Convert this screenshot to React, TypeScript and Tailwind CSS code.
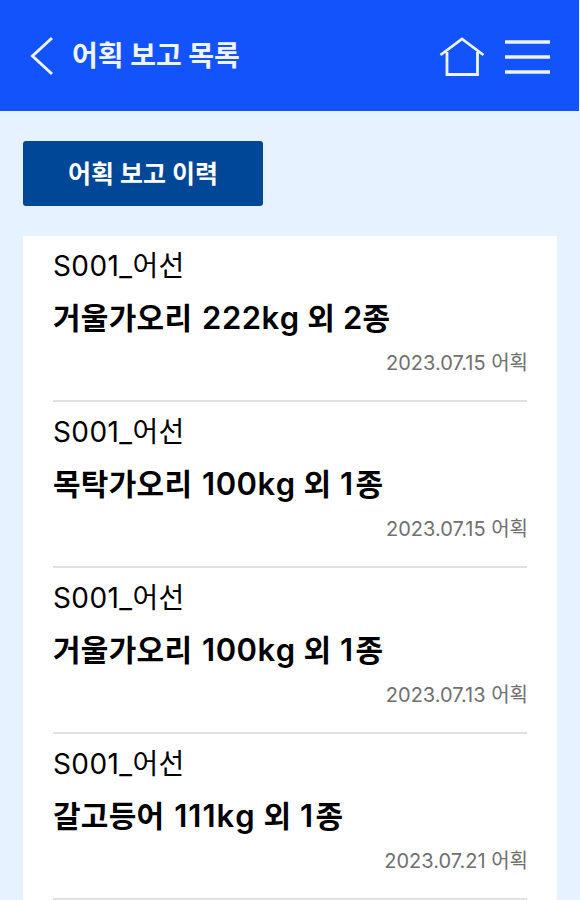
import React from 'react';

interface CatchReport {
    id: number;
    vessel: string;
    species: string;
    weight: string;
    others: number;
    date: string;
}

const reports: CatchReport[] = [
    { id: 1, vessel: 'S001_어선', species: '거울가오리', weight: '222kg', others: 2, date: '2023.07.15' },
    { id: 2, vessel: 'S001_어선', species: '목탁가오리', weight: '100kg', others: 1, date: '2023.07.15' },
    { id: 3, vessel: 'S001_어선', species: '거울가오리', weight: '100kg', others: 1, date: '2023.07.13' },
    { id: 4, vessel: 'S001_어선', species: '갈고등어', weight: '111kg', others: 1, date: '2023.07.21' },
];

const Header: React.FC = () => (
    <header className="mr-px flex h-[111px] shrink-0 items-center bg-[#1353fb] pl-[30px] pr-[29px] text-[#eef3ff]">
        <button aria-label="뒤로">
            <svg width="24" height="40" viewBox="0 0 24 40" fill="none" stroke="currentColor" strokeWidth="3">
                <path d="M22 2 L2.5 20 L22 38" />
            </svg>
        </button>
        <h1 className="ml-[18px] text-[28px] font-bold leading-10">어획 보고 목록</h1>
        <div className="ml-auto flex items-center gap-5">
            <button aria-label="홈">
                <svg width="46" height="42" viewBox="0 0 46 42" fill="none" stroke="currentColor" strokeWidth="2.8">
                    <path d="M1.5 20 L23 4 L44.5 20" />
                    <path d="M8 17 V39.5 H38.5 V17" />
                </svg>
            </button>
            <button aria-label="메뉴">
                <svg width="45" height="36" viewBox="0 0 45 36" stroke="currentColor" strokeWidth="3.4">
                    <path d="M0 4 H45 M0 19 H45 M0 34 H45" />
                </svg>
            </button>
        </div>
    </header>
);

const ReportItem: React.FC<{ report: CatchReport }> = ({ report }) => (
    <li className="h-[166px] border-b-2 border-[#dfe1e1] pt-3">
        <p className="text-[28px] leading-9 tracking-[0.4px]">{report.vessel}</p>
        <h2 className="mt-3 text-[30px] font-semibold leading-[44px] tracking-[0.25px]">
            {report.species}{' '}
            <span
                className={`ml-0.5 text-[31px] leading-none [font-kerning:none] ${report.weight === '111kg' ? 'tracking-[1px]' : 'tracking-[0.5px]'
                    }`}
            >
                {report.weight}
            </span>
            {' '}외{' '}
            <span className={`text-[31px] leading-none ${report.others === 1 ? 'ml-px mr-0.5' : ''}`}>{report.others}</span>종
        </h2>
        <p className="-mr-px mt-[9px] text-right text-[20px] leading-7 text-[#707070]">{report.date} 어획</p>
    </li>
);

const App: React.FC = () => {
    return (
        <div className="flex h-[900px] w-[580px] flex-col overflow-hidden bg-[#e6f2ff] font-[Inter,'Noto_Sans_CJK_KR',sans-serif] text-black">
            <Header />
            <main className="px-[23px] pt-[30px]">
                <button className="h-[65px] w-60 rounded-[3px] bg-[#004797] pt-0.5 text-[25px] font-bold text-white">
                    어획 보고 이력
                </button>
                <ul className="mt-[30px] bg-white px-[30px]">
                    {reports.map((report) => (
                        <ReportItem key={report.id} report={report} />
                    ))}
                </ul>
            </main>
        </div>
    );
};

export default App;
